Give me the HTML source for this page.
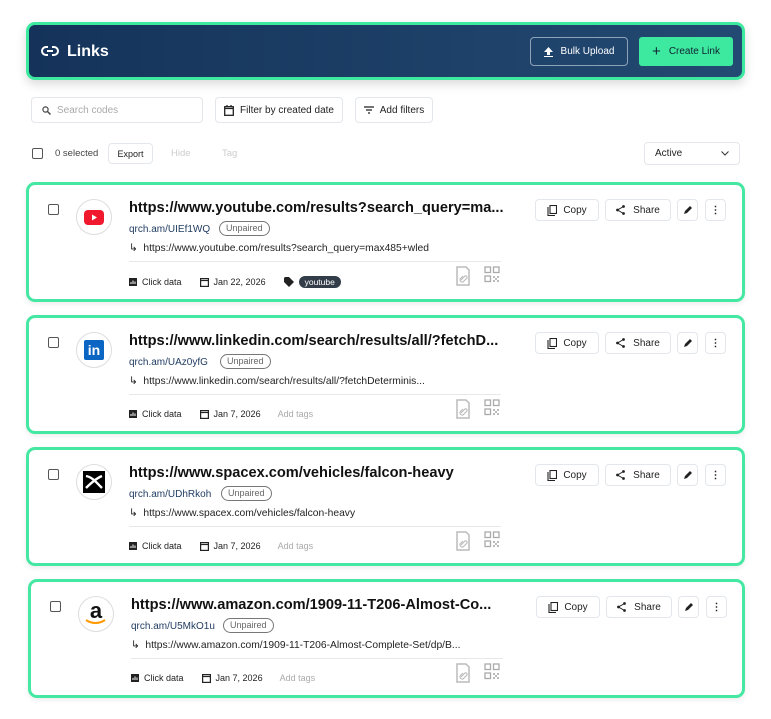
<!DOCTYPE html>
<html><head><meta charset="utf-8"><style>
*{box-sizing:border-box;margin:0;padding:0}
body{width:771px;height:719px;background:#fff;font-family:"Liberation Sans",Arial,sans-serif;color:#111;position:relative;overflow:hidden}
.abs{position:absolute}
.hdr{left:26px;top:22px;width:719px;height:58px;border:3px solid #3de89f;border-radius:9px;background:linear-gradient(90deg,#15335a,#234a72);box-shadow:0 4px 10px rgba(0,0,0,.15)}
.btn{position:absolute;border:1px solid #e3e6ea;border-radius:4px;background:#fff;font-size:10px;color:#222;display:flex;align-items:center;justify-content:center;gap:6px}
.card{position:absolute;border:3px solid #45e8a2;border-radius:9px;background:#fff;box-shadow:0 2px 6px rgba(0,0,0,.08)}
.cb{position:absolute;left:19px;top:19px;width:11px;height:11px;border:1.5px solid #555;border-radius:2px}
.logo{position:absolute;left:47px;top:14px;width:36px;height:36px;border:1px solid #ddd;border-radius:50%;display:flex;align-items:center;justify-content:center;background:#fff}
.title{position:absolute;left:100px;top:15px;font-size:14.6px;font-weight:bold;color:#111;white-space:nowrap}
.sl{position:absolute;left:100px;top:39px;font-size:10px;color:#1e3a5f}
.pill{position:absolute;top:36px;height:15px;border:1px solid #777;border-radius:8px;font-size:9px;color:#666;padding:0 6px;line-height:13px}
.rd{position:absolute;left:100px;top:57px;font-size:10.3px;color:#222;white-space:nowrap}
.div{position:absolute;left:100px;top:76px;width:372px;height:1px;background:#e6e8eb}
.bot{position:absolute;left:100px;top:91px;font-size:9px;color:#222;display:flex;align-items:center;white-space:nowrap}
.ico{position:absolute;top:81px}
</style></head><body>

<div class="abs hdr">
 <svg class="abs" style="left:12px;top:20px" width="18" height="12" viewBox="0 0 18 12"><path d="M7 2H5a4 4 0 0 0 0 8h2M11 2h2a4 4 0 0 1 0 8h-2M6 6h6" stroke="#fff" stroke-width="2" fill="none"/></svg>
 <div class="abs" style="left:38px;top:18px;font-size:16px;font-weight:bold;color:#fff">Links</div>
 <div class="abs" style="left:501px;top:12px;width:98px;height:29px;border:1px solid #8fa3b8;border-radius:4px;color:#fff;font-size:10px;display:flex;align-items:center;justify-content:center;gap:8px"><svg width="9" height="10" viewBox="0 0 9 10"><path d="M4.5 0L9 5H6v3H3V5H0z M0 9h9v1H0z" fill="#fff"/></svg>Bulk Upload</div>
 <div class="abs" style="left:610px;top:12px;width:94px;height:29px;background:#3de89f;border-radius:3px;color:#123;font-size:10px;display:flex;align-items:center;justify-content:center;gap:8px"><span style="font-size:15px;line-height:10px">+</span>Create Link</div>
</div>

<div class="btn" style="left:31px;top:97px;width:172px;height:26px;justify-content:flex-start;padding-left:10px;color:#aaa"><svg width="9" height="9" viewBox="0 0 9 9"><circle cx="3.5" cy="3.5" r="2.6" stroke="#444" stroke-width="1.2" fill="none"/><path d="M5.5 5.5L8.5 8.5" stroke="#444" stroke-width="1.4"/></svg>Search codes</div>
<div class="btn" style="left:215px;top:97px;width:128px;height:26px"><svg width="10" height="11" viewBox="0 0 10 11"><rect x=".7" y="1.7" width="8.6" height="8.6" stroke="#222" stroke-width="1.3" fill="none"/><path d="M.7 3.5h8.6M3 0v2M7 0v2" stroke="#222" stroke-width="1.3"/></svg>Filter by created date</div>
<div class="btn" style="left:355px;top:97px;width:78px;height:26px"><svg width="10" height="8" viewBox="0 0 10 8"><path d="M0 1h10M2 4h6M4 7h2" stroke="#222" stroke-width="1.2"/></svg>Add filters</div>

<div class="abs" style="left:32px;top:148px;width:11px;height:11px;border:1.5px solid #555;border-radius:2px"></div>
<div class="abs" style="left:55px;top:148px;font-size:9.5px;color:#444">0 selected</div>
<div class="btn" style="left:108px;top:143px;width:45px;height:21px;font-size:9px">Export</div>
<div class="abs" style="left:171px;top:148px;font-size:9.5px;color:#ccc">Hide</div>
<div class="abs" style="left:222px;top:148px;font-size:9.5px;color:#ccc">Tag</div>
<div class="btn" style="left:644px;top:142px;width:96px;height:23px;justify-content:space-between;padding:0 10px;font-size:10px">Active<svg width="8" height="5" viewBox="0 0 8 5"><path d="M.5.5L4 4 7.5.5" stroke="#333" fill="none"/></svg></div>

<div class="card" style="left:26px;top:182px;width:719px;height:120px">
 <div class="cb"></div>
 <div class="logo"><svg width="20" height="15" viewBox="0 0 20 15"><rect width="20" height="15" rx="4" fill="#f0192e"/><path d="M8 4.5v6l5-3z" fill="#fff"/></svg></div>
 <div class="title">https://www.youtube.com/results?search_query=ma...</div>
 <div class="sl">qrch.am/UIEf1WQ</div><div class="pill" style="left:190px">Unpaired</div>
 <div class="rd">↳&nbsp; https://www.youtube.com/results?search_query=max485+wled</div>
 <div class="div"></div>
 <div class="bot"><svg width="8" height="8"><rect width="8" height="8" fill="#222"/><path d="M2 6V4M4 6V2.5M6 6V3.5" stroke="#fff"/></svg>&nbsp;&nbsp;Click data<span style="width:18px"></span><svg width="9" height="10"><rect x=".6" y="1.6" width="7.8" height="7.8" stroke="#222" stroke-width="1.2" fill="none"/><path d="M.6 3.5h7.8" stroke="#222" stroke-width="1.2"/></svg>&nbsp;&nbsp;Jan 22, 2026<span style="width:18px"></span><svg width="10" height="10"><path d="M0 1v4l5 5 5-5-5-5H1z" fill="#222"/></svg>&nbsp;&nbsp;<span style="background:#333d4a;color:#fff;border-radius:7px;padding:1px 6px;font-size:8.5px">youtube</span></div>
 <svg class="ico" style="left:427px" width="14" height="20" viewBox="0 0 14 20"><path d="M1 1h9l3 3v15H1z" fill="none" stroke="#bbb" stroke-width="1.5"/><path d="M5 14l4-4a1.5 1.5 0 0 1 2 2l-4 4a2.5 2.5 0 0 1-3-3l3-3" fill="none" stroke="#bbb" stroke-width="1.1"/></svg>
 <svg class="ico" style="left:455px" width="16" height="17" viewBox="0 0 16 17"><rect x="1" y="1" width="5.5" height="5.5" fill="none" stroke="#aaa" stroke-width="1.3"/><rect x="9.5" y="1" width="5.5" height="5.5" fill="none" stroke="#aaa" stroke-width="1.3"/><rect x="1" y="10" width="5.5" height="5.5" fill="none" stroke="#aaa" stroke-width="1.3"/><path d="M9 10h2v2H9zM13 10h2v2h-2zM11 12h2v2h-2zM9 14h2v2H9zM13 14h2v2h-2z" fill="#bbb"/></svg>
 <div class="btn" style="left:506px;top:14px;width:64px;height:22px"><svg width="10" height="11"><path d="M1 2v8.5h7" stroke="#222" stroke-width="1.1" fill="none"/><rect x="3" y=".5" width="6.5" height="8" fill="none" stroke="#222" stroke-width="1.1"/></svg>Copy</div>
 <div class="btn" style="left:576px;top:14px;width:66px;height:22px;gap:8px"><svg width="9" height="10"><circle cx="7.5" cy="1.5" r="1.4" fill="#222"/><circle cx="1.5" cy="5" r="1.4" fill="#222"/><circle cx="7.5" cy="8.5" r="1.4" fill="#222"/><path d="M7.5 1.5L1.5 5l6 3.5" stroke="#222" fill="none"/></svg>Share</div>
 <div class="btn" style="left:648px;top:14px;width:21px;height:22px"><svg width="9" height="9"><path d="M1 8l1-3 5-5 2 2-5 5z" fill="#222"/></svg></div>
 <div class="btn" style="left:676px;top:14px;width:21px;height:22px;font-weight:bold">⋮</div>
</div>

<div class="card" style="left:26px;top:315px;width:719px;height:119px">
 <div class="cb"></div>
 <div class="logo"><div style="width:20px;height:20px;background:#0a66c2;border-radius:2px;color:#fff;font-weight:bold;font-size:14px;line-height:21px;text-align:center">in</div></div>
 <div class="title">https://www.linkedin.com/search/results/all/?fetchD...</div>
 <div class="sl">qrch.am/UAz0yfG</div><div class="pill" style="left:191px">Unpaired</div>
 <div class="rd">↳&nbsp; https://www.linkedin.com/search/results/all/?fetchDeterminis...</div>
 <div class="div"></div>
 <div class="bot"><svg width="8" height="8"><rect width="8" height="8" fill="#222"/><path d="M2 6V4M4 6V2.5M6 6V3.5" stroke="#fff"/></svg>&nbsp;&nbsp;Click data<span style="width:18px"></span><svg width="9" height="10"><rect x=".6" y="1.6" width="7.8" height="7.8" stroke="#222" stroke-width="1.2" fill="none"/><path d="M.6 3.5h7.8" stroke="#222" stroke-width="1.2"/></svg>&nbsp;&nbsp;Jan 7, 2026<span style="width:17px"></span><span style="color:#aaa">Add tags</span></div>
 <svg class="ico" style="left:427px" width="14" height="20" viewBox="0 0 14 20"><path d="M1 1h9l3 3v15H1z" fill="none" stroke="#bbb" stroke-width="1.5"/><path d="M5 14l4-4a1.5 1.5 0 0 1 2 2l-4 4a2.5 2.5 0 0 1-3-3l3-3" fill="none" stroke="#bbb" stroke-width="1.1"/></svg>
 <svg class="ico" style="left:455px" width="16" height="17" viewBox="0 0 16 17"><rect x="1" y="1" width="5.5" height="5.5" fill="none" stroke="#aaa" stroke-width="1.3"/><rect x="9.5" y="1" width="5.5" height="5.5" fill="none" stroke="#aaa" stroke-width="1.3"/><rect x="1" y="10" width="5.5" height="5.5" fill="none" stroke="#aaa" stroke-width="1.3"/><path d="M9 10h2v2H9zM13 10h2v2h-2zM11 12h2v2h-2zM9 14h2v2H9zM13 14h2v2h-2z" fill="#bbb"/></svg>
 <div class="btn" style="left:506px;top:14px;width:64px;height:22px"><svg width="10" height="11"><path d="M1 2v8.5h7" stroke="#222" stroke-width="1.1" fill="none"/><rect x="3" y=".5" width="6.5" height="8" fill="none" stroke="#222" stroke-width="1.1"/></svg>Copy</div>
 <div class="btn" style="left:576px;top:14px;width:66px;height:22px;gap:8px"><svg width="9" height="10"><circle cx="7.5" cy="1.5" r="1.4" fill="#222"/><circle cx="1.5" cy="5" r="1.4" fill="#222"/><circle cx="7.5" cy="8.5" r="1.4" fill="#222"/><path d="M7.5 1.5L1.5 5l6 3.5" stroke="#222" fill="none"/></svg>Share</div>
 <div class="btn" style="left:648px;top:14px;width:21px;height:22px"><svg width="9" height="9"><path d="M1 8l1-3 5-5 2 2-5 5z" fill="#222"/></svg></div>
 <div class="btn" style="left:676px;top:14px;width:21px;height:22px;font-weight:bold">⋮</div>
</div>

<div class="card" style="left:26px;top:447px;width:719px;height:119px">
 <div class="cb"></div>
 <div class="logo"><svg width="22" height="22" viewBox="0 0 22 22"><rect width="22" height="22" fill="#000"/><path d="M3 5c6 1 10 6 16 12M19 5C14 7 9 11 3 17" stroke="#fff" stroke-width="2.4" fill="none"/></svg></div>
 <div class="title">https://www.spacex.com/vehicles/falcon-heavy</div>
 <div class="sl">qrch.am/UDhRkoh</div><div class="pill" style="left:192px">Unpaired</div>
 <div class="rd">↳&nbsp; https://www.spacex.com/vehicles/falcon-heavy</div>
 <div class="div"></div>
 <div class="bot"><svg width="8" height="8"><rect width="8" height="8" fill="#222"/><path d="M2 6V4M4 6V2.5M6 6V3.5" stroke="#fff"/></svg>&nbsp;&nbsp;Click data<span style="width:18px"></span><svg width="9" height="10"><rect x=".6" y="1.6" width="7.8" height="7.8" stroke="#222" stroke-width="1.2" fill="none"/><path d="M.6 3.5h7.8" stroke="#222" stroke-width="1.2"/></svg>&nbsp;&nbsp;Jan 7, 2026<span style="width:17px"></span><span style="color:#aaa">Add tags</span></div>
 <svg class="ico" style="left:427px" width="14" height="20" viewBox="0 0 14 20"><path d="M1 1h9l3 3v15H1z" fill="none" stroke="#bbb" stroke-width="1.5"/><path d="M5 14l4-4a1.5 1.5 0 0 1 2 2l-4 4a2.5 2.5 0 0 1-3-3l3-3" fill="none" stroke="#bbb" stroke-width="1.1"/></svg>
 <svg class="ico" style="left:455px" width="16" height="17" viewBox="0 0 16 17"><rect x="1" y="1" width="5.5" height="5.5" fill="none" stroke="#aaa" stroke-width="1.3"/><rect x="9.5" y="1" width="5.5" height="5.5" fill="none" stroke="#aaa" stroke-width="1.3"/><rect x="1" y="10" width="5.5" height="5.5" fill="none" stroke="#aaa" stroke-width="1.3"/><path d="M9 10h2v2H9zM13 10h2v2h-2zM11 12h2v2h-2zM9 14h2v2H9zM13 14h2v2h-2z" fill="#bbb"/></svg>
 <div class="btn" style="left:506px;top:14px;width:64px;height:22px"><svg width="10" height="11"><path d="M1 2v8.5h7" stroke="#222" stroke-width="1.1" fill="none"/><rect x="3" y=".5" width="6.5" height="8" fill="none" stroke="#222" stroke-width="1.1"/></svg>Copy</div>
 <div class="btn" style="left:576px;top:14px;width:66px;height:22px;gap:8px"><svg width="9" height="10"><circle cx="7.5" cy="1.5" r="1.4" fill="#222"/><circle cx="1.5" cy="5" r="1.4" fill="#222"/><circle cx="7.5" cy="8.5" r="1.4" fill="#222"/><path d="M7.5 1.5L1.5 5l6 3.5" stroke="#222" fill="none"/></svg>Share</div>
 <div class="btn" style="left:648px;top:14px;width:21px;height:22px"><svg width="9" height="9"><path d="M1 8l1-3 5-5 2 2-5 5z" fill="#222"/></svg></div>
 <div class="btn" style="left:676px;top:14px;width:21px;height:22px;font-weight:bold">⋮</div>
</div>

<div class="card" style="left:28px;top:579px;width:717px;height:119px">
 <div class="cb"></div>
 <div class="logo"><div style="position:relative;width:24px;height:26px;text-align:center;font-weight:bold;font-size:22px;line-height:20px;color:#111">a<svg style="position:absolute;left:1px;top:18px" width="22" height="7" viewBox="0 0 22 7"><path d="M1 1c6 4 13 4 19 0" stroke="#f90" stroke-width="2" fill="none"/></svg></div></div>
 <div class="title">https://www.amazon.com/1909-11-T206-Almost-Co...</div>
 <div class="sl">qrch.am/U5MkO1u</div><div class="pill" style="left:192px">Unpaired</div>
 <div class="rd">↳&nbsp; https://www.amazon.com/1909-11-T206-Almost-Complete-Set/dp/B...</div>
 <div class="div"></div>
 <div class="bot"><svg width="8" height="8"><rect width="8" height="8" fill="#222"/><path d="M2 6V4M4 6V2.5M6 6V3.5" stroke="#fff"/></svg>&nbsp;&nbsp;Click data<span style="width:18px"></span><svg width="9" height="10"><rect x=".6" y="1.6" width="7.8" height="7.8" stroke="#222" stroke-width="1.2" fill="none"/><path d="M.6 3.5h7.8" stroke="#222" stroke-width="1.2"/></svg>&nbsp;&nbsp;Jan 7, 2026<span style="width:17px"></span><span style="color:#aaa">Add tags</span></div>
 <svg class="ico" style="left:425px" width="14" height="20" viewBox="0 0 14 20"><path d="M1 1h9l3 3v15H1z" fill="none" stroke="#bbb" stroke-width="1.5"/><path d="M5 14l4-4a1.5 1.5 0 0 1 2 2l-4 4a2.5 2.5 0 0 1-3-3l3-3" fill="none" stroke="#bbb" stroke-width="1.1"/></svg>
 <svg class="ico" style="left:453px" width="16" height="17" viewBox="0 0 16 17"><rect x="1" y="1" width="5.5" height="5.5" fill="none" stroke="#aaa" stroke-width="1.3"/><rect x="9.5" y="1" width="5.5" height="5.5" fill="none" stroke="#aaa" stroke-width="1.3"/><rect x="1" y="10" width="5.5" height="5.5" fill="none" stroke="#aaa" stroke-width="1.3"/><path d="M9 10h2v2H9zM13 10h2v2h-2zM11 12h2v2h-2zM9 14h2v2H9zM13 14h2v2h-2z" fill="#bbb"/></svg>
 <div class="btn" style="left:505px;top:14px;width:64px;height:22px"><svg width="10" height="11"><path d="M1 2v8.5h7" stroke="#222" stroke-width="1.1" fill="none"/><rect x="3" y=".5" width="6.5" height="8" fill="none" stroke="#222" stroke-width="1.1"/></svg>Copy</div>
 <div class="btn" style="left:575px;top:14px;width:66px;height:22px;gap:8px"><svg width="9" height="10"><circle cx="7.5" cy="1.5" r="1.4" fill="#222"/><circle cx="1.5" cy="5" r="1.4" fill="#222"/><circle cx="7.5" cy="8.5" r="1.4" fill="#222"/><path d="M7.5 1.5L1.5 5l6 3.5" stroke="#222" fill="none"/></svg>Share</div>
 <div class="btn" style="left:647px;top:14px;width:21px;height:22px"><svg width="9" height="9"><path d="M1 8l1-3 5-5 2 2-5 5z" fill="#222"/></svg></div>
 <div class="btn" style="left:675px;top:14px;width:21px;height:22px;font-weight:bold">⋮</div>
</div>
</body></html>
